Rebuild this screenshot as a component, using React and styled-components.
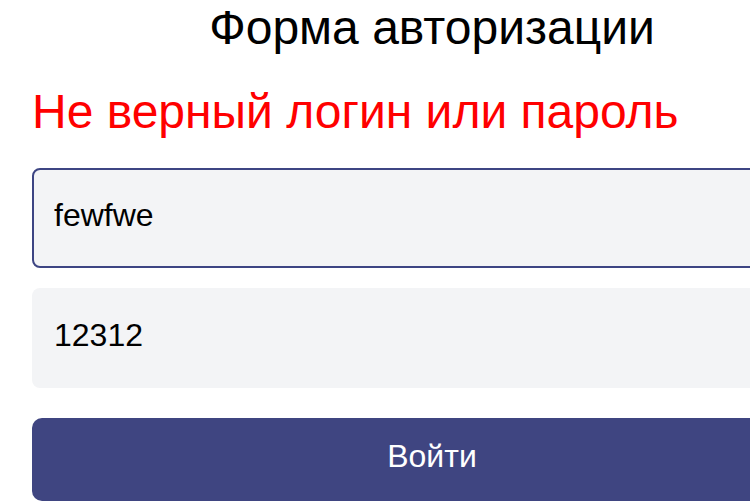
import React from "react";
import styled, { createGlobalStyle } from "styled-components";

const Global = createGlobalStyle`
  html, body { margin: 0; padding: 0; background: #ffffff; }
  body { font-family: "Liberation Sans", Arial, sans-serif; overflow: hidden; }
`;

const Form = styled.form`
  display: flex;
  flex-direction: column;
  width: 800px;
  margin-left: 32px;
  box-sizing: border-box;
`;

const Title = styled.h1`
  margin: 0;
  font-size: 48px;
  font-weight: 400;
  line-height: 55px;
  text-align: center;
  color: #000;
`;

const ErrorText = styled.p`
  margin: 29px 0 29px;
  font-size: 48px;
  line-height: 55px;
  color: #ff0000;
`;

const Field = styled.input`
  box-sizing: border-box;
  width: 100%;
  height: 100px;
  margin-bottom: ${(p) => (p.$last ? "30px" : "20px")};
  padding: 0 20px 6px;
  border: 2px solid ${(p) => (p.$focused ? "#3d4583" : "transparent")};
  border-radius: 8px;
  background: #f3f4f6;
  font-family: "Liberation Sans", Arial, sans-serif;
  font-size: 32px;
  color: #000;
  outline: none;
`;

const Submit = styled.button`
  box-sizing: border-box;
  width: 100%;
  height: 83px;
  padding: 0 0 6px;
  border: none;
  border-radius: 10px;
  background: #3f4581;
  color: #ffffff;
  font-family: "Liberation Sans", Arial, sans-serif;
  font-size: 32px;
  line-height: 37px;
  cursor: pointer;
`;

export default function App() {
  return (
    <>
      <Global />
      <Form onSubmit={(e) => e.preventDefault()}>
        <Title>Форма авторизации</Title>
        <ErrorText>Не верный логин или пароль</ErrorText>
        <Field $focused type="text" defaultValue="fewfwe" />
        <Field $last type="text" defaultValue="12312" />
        <Submit type="submit">Войти</Submit>
      </Form>
    </>
  );
}
